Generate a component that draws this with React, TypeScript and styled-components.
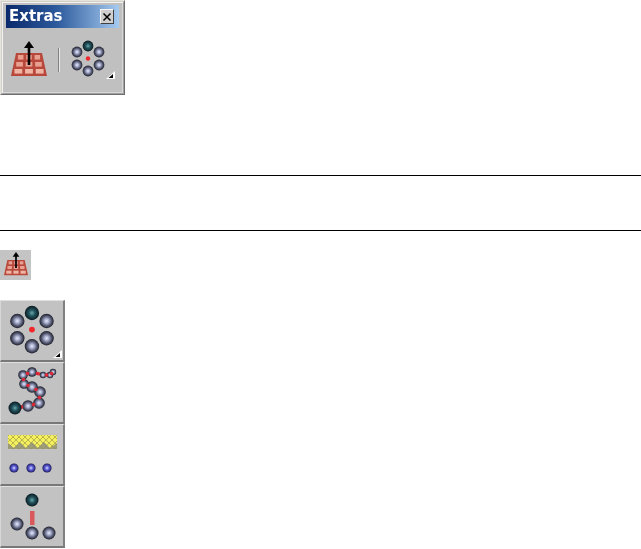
import styled, { createGlobalStyle } from "styled-components";

const GlobalStyle = createGlobalStyle`
  html, body {
    margin: 0;
    padding: 0;
    background: #fff;
  }
`;

const Page = styled.div`
  width: 641px;
  height: 549px;
  overflow: hidden;
  display: flex;
  flex-direction: column;
`;

const Palette = styled.div`
  box-sizing: border-box;
  width: 125px;
  height: 95px;
  padding: 4px 5px 5px;
  background: #c0c0c0;
  border: 1px solid;
  border-color: #e4e4dc #6e6e6e #6e6e6e #e4e4dc;
  box-shadow: inset 1px 1px 0 #d4d0c8, inset -1px -1px 0 #a0a0a0, inset 2px 2px 0 #f2f2f2, inset -2px -2px 0 #d8d8d8;
  display: flex;
  flex-direction: column;
`;

const TitleBar = styled.div`
  height: 23px;
  flex: none;
  display: flex;
  align-items: center;
  justify-content: space-between;
  padding: 0 5px 0 3px;
  background: linear-gradient(90deg, #0a2a6c 0%, #2c5a9c 45%, #a6caf0 100%);
`;

const Title = styled.span`
  font-family: "DejaVu Sans", sans-serif;
  font-weight: 700;
  font-size: 15px;
  line-height: 23px;
  color: #fff;
  filter: blur(0.3px);
`;

const CloseButton = styled.div`
  box-sizing: border-box;
  width: 14px;
  height: 15px;
  background: #cfcfcf;
  border: 1px solid;
  border-color: #f4f4f4 #404040 #404040 #f4f4f4;
  display: flex;
  align-items: center;
  justify-content: center;
`;

const PaletteBody = styled.div`
  flex: 1;
  display: flex;
  align-items: center;
  justify-content: space-between;
  padding: 0 3px 0 5px;
`;

const Divider = styled.div`
  width: 1px;
  height: 24px;
  background: #808080;
  border-right: 1px solid #e8e8e8;
  margin-top: 2px;
`;

const Rule = styled.hr<{ $top: number }>`
  width: 100%;
  height: 1px;
  margin: ${(p) => p.$top}px 0 0;
  border: 0;
  background: #000;
  flex: none;
`;

const SmallTool = styled.div`
  box-sizing: border-box;
  width: 31px;
  height: 30px;
  margin-top: 19px;
  padding-top: 2px;
  background: #c4c4c4;
  flex: none;
  display: flex;
  justify-content: center;
`;

const ToolStack = styled.div`
  width: 65px;
  margin-top: 20px;
  display: flex;
  flex-direction: column;
  flex: none;
`;

const ToolButton = styled.div`
  box-sizing: border-box;
  width: 65px;
  height: 62px;
  flex: none;
  background: #c2c2c2;
  border-top: 1px solid #e0e0e0;
  border-left: 1px solid #d8d8d8;
  border-right: 2px solid #808080;
  border-bottom: 2px solid #787878;
  overflow: hidden;
`;

const Drawing = styled.svg<{ $blur?: number }>`
  display: block;
  flex: none;
  overflow: visible;
  filter: blur(${(p) => p.$blur ?? 0.6}px);
`;

const Defs = () => (
  <svg width="0" height="0" style={{ position: "absolute" }}>
    <defs>
      <radialGradient id="grey">
        <stop offset="0" stopColor="#e8ecff" />
        <stop offset="0.32" stopColor="#a8aecc" />
        <stop offset="0.68" stopColor="#565a72" />
        <stop offset="1" stopColor="#1c1e2a" />
      </radialGradient>
      <radialGradient id="dark">
        <stop offset="0" stopColor="#6aa8aa" />
        <stop offset="0.42" stopColor="#245660" />
        <stop offset="1" stopColor="#0a1a20" />
      </radialGradient>
      <radialGradient id="blue">
        <stop offset="0" stopColor="#dcdcff" />
        <stop offset="0.45" stopColor="#5c5cd8" />
        <stop offset="1" stopColor="#1c1c5c" />
      </radialGradient>
    </defs>
  </svg>
);

const Atom = ({ x, y, r = 6.5, kind = "grey" }: { x: number; y: number; r?: number; kind?: string }) => (
  <circle cx={x} cy={y} r={r} fill={`url(#${kind})`} />
);

const Corner = ({ x, y }: { x: number; y: number }) => (
  <g>
    <path d={`M${x + 9} ${y - 2}V${y + 6}H${x}Z`} fill="#fff" />
    <path d={`M${x + 7} ${y + 1}V${y + 5}H${x + 2.5}Z`} fill="#000" />
  </g>
);

const brickRows = [
  { y: 14, left: 5.5 },
  { y: 21, left: 3.8 },
  { y: 28, left: 2 },
];

// brick patch with the up arrow, drawn on a 36x36 box
const BrickArrow = ({ size }: { size: number }) => (
  <Drawing width={size} height={size} viewBox="0 0 36 36" $blur={size > 30 ? 0.6 : 0.45}>
    <path d="M5 12H31L36 35H0Z" fill="#b8483c" />
    {brickRows.map((row) =>
      [0, 1, 2].map((c) => {
        const w = (36 - row.left * 2) / 3;
        return (
          <rect
            key={`${row.y}-${c}`}
            x={row.left + c * w + 1.4}
            y={row.y}
            width={w - 2.8}
            height="4.6"
            fill={row.y === 28 ? "#f0b4a4" : "#e8a090"}
          />
        );
      })
    )}
    <path d="M18 24V4" stroke="#000" strokeWidth="2.6" />
    <path d="M18 0L23 7H13Z" fill="#000" />
  </Drawing>
);

const RingAtoms = () => (
  <>
    <circle cx="18" cy="18.5" r="2.2" fill="#f0282c" />
    <Atom x={18} y={6} r={5.4} kind="dark" />
    <Atom x={7} y={12} r={5.4} />
    <Atom x={29} y={12} r={5.4} />
    <Atom x={7} y={25} r={5.4} />
    <Atom x={29} y={25} r={5.4} />
    <Atom x={18} y={31} r={5.4} />
  </>
);

const chain = [
  [14, 45], [27, 43], [38, 40], [39, 29], [31, 24], [23, 21], [22, 12], [31, 9], [42, 12], [49, 12], [52, 9],
];

const ChainIcon = () => (
  <Drawing width="62" height="59" viewBox="0 0 62 59">
    <polyline points={chain.map((p) => p.join(",")).join(" ")} fill="none" stroke="#d8303c" strokeWidth="3" />
    {chain.slice(1).map(([x, y], i) => (
      <Atom key={x + "-" + y} x={x} y={y} r={i < 4 ? 5.8 : i < 7 ? 4.8 : 3.2} />
    ))}
    {chain.slice(1).map(([x, y], i) => (
      <circle key={y + "-" + x} cx={(x + chain[i][0]) / 2} cy={(y + chain[i][1]) / 2} r="1.8" fill="#e02834" />
    ))}
    <Atom x={14} y={45} r={6.5} kind="dark" />
  </Drawing>
);

const SurfaceIcon = () => (
  <Drawing width="62" height="59" viewBox="0 0 62 59">
    <defs>
      <pattern id="weave" width="6" height="6" patternUnits="userSpaceOnUse">
        <rect width="6" height="6" fill="#f4f060" />
        <path d="M0 0L6 6M6 0L0 6" stroke="#b4b048" strokeWidth="0.9" />
      </pattern>
    </defs>
    <rect x="7" y="10" width="49" height="14" fill="url(#weave)" />
    <path d="M7 24V18L13 23L19 17L25 23L31 17L37 23L43 17L49 23L56 18V24Z" fill="#8a8a7c" opacity="0.8" />
    <Atom x={13} y={43} r={4.6} kind="blue" />
    <Atom x={30} y={43} r={4.6} kind="blue" />
    <Atom x={46} y={43} r={4.6} kind="blue" />
  </Drawing>
);

const BondIcon = () => (
  <Drawing width="62" height="59" viewBox="0 0 62 59">
    <rect x="29" y="24" width="4.5" height="14" fill="#d8585c" />
    <Atom x={31} y={13} r={6.5} kind="dark" />
    <Atom x={16} y={37} r={6.5} />
    <Atom x={31} y={46} r={6.5} />
    <Atom x={48} y={46} r={6.5} />
  </Drawing>
);

export default function App() {
  return (
    <Page>
      <GlobalStyle />
      <Defs />
      <Palette>
        <TitleBar>
          <Title>Extras</Title>
          <CloseButton>
            <Drawing width="8" height="8" viewBox="0 0 8 8" $blur={0.2}>
              <path d="M0.5 0.5L7.5 7.5M7.5 0.5L0.5 7.5" stroke="#000" strokeWidth="1.5" />
            </Drawing>
          </CloseButton>
        </TitleBar>
        <PaletteBody>
          <BrickArrow size={36} />
          <Divider />
          <Drawing width="46" height="40" viewBox="0 -1 46 40">
            <RingAtoms />
            <Corner x={36} y={33} />
          </Drawing>
        </PaletteBody>
      </Palette>
      <Rule $top={80} />
      <Rule $top={54} />
      <SmallTool>
        <BrickArrow size={24} />
      </SmallTool>
      <ToolStack>
        <ToolButton>
          <Drawing width="62" height="59" viewBox="0 0 62 59">
            <g transform="translate(7 4) scale(1.33)">
              <RingAtoms />
            </g>
            <Corner x={52} y={51} />
          </Drawing>
        </ToolButton>
        <ToolButton>
          <ChainIcon />
        </ToolButton>
        <ToolButton>
          <SurfaceIcon />
        </ToolButton>
        <ToolButton>
          <BondIcon />
        </ToolButton>
      </ToolStack>
    </Page>
  );
}
